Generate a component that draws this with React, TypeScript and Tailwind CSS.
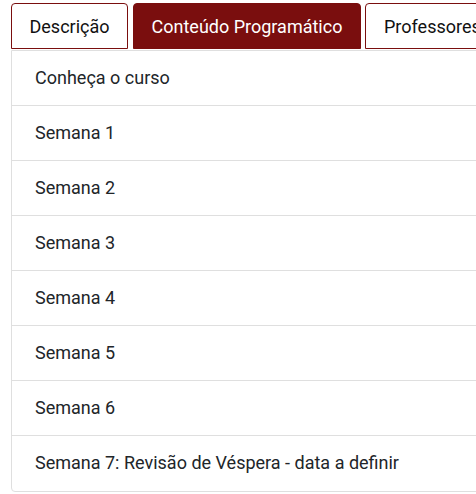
import React from "react";

const items = [
  "Conheça o curso",
  "Semana 1",
  "Semana 2",
  "Semana 3",
  "Semana 4",
  "Semana 5",
  "Semana 6",
  "Semana 7: Revisão de Véspera - data a definir",
];

export default function App() {
  return (
    <div className="w-[476px] h-[494px] overflow-hidden bg-white" style={{ fontFamily: "Roboto, sans-serif" }}>
      <div className="pl-[11px] pt-[3px] w-[700px]">
        <div className="flex gap-[5px]">
          <div className="w-[117px] h-[46px] flex items-center justify-center border border-[#7a0e0e] rounded-t-[4px] text-[18px] text-[#111] bg-white">
            Descrição
          </div>
          <div className="w-[228px] h-[46px] flex items-center justify-center border border-[#7a0e0e] rounded-t-[4px] text-[18px] text-white bg-[#7a0e0e]">
            Conteúdo Programático
          </div>
          <div className="ml-[-1px] w-[140px] h-[46px] px-[18px] flex items-center border border-[#7a0e0e] rounded-t-[4px] text-[18px] text-[#111] bg-white">
            Professores
          </div>
        </div>
        <div className="mt-px w-[560px] border border-[#dfdfdf] rounded-b-[4px]">
          {items.map((t, i) => (
            <div
              key={i}
              className={`h-[55px] flex items-center pl-[23px] pb-[2px] text-[18px] text-[#212529] ${i < items.length - 1 ? "border-b border-[#dfdfdf]" : ""}`}
            >
              {t}
            </div>
          ))}
        </div>
      </div>
    </div>
  );
}
